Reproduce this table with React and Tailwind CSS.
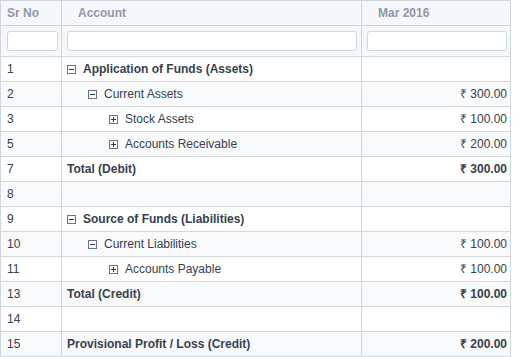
const rows = [
  { sr: 1, label: 'Application of Funds (Assets)', level: 0, toggle: 'minus', bold: true, amount: '' },
  { sr: 2, label: 'Current Assets', level: 1, toggle: 'minus', amount: '₹ 300.00' },
  { sr: 3, label: 'Stock Assets', level: 2, toggle: 'plus', amount: '₹ 100.00' },
  { sr: 5, label: 'Accounts Receivable', level: 2, toggle: 'plus', amount: '₹ 200.00' },
  { sr: 7, label: 'Total (Debit)', level: 0, bold: true, amount: '₹ 300.00' },
  { sr: 8, label: '', level: 0, amount: '' },
  { sr: 9, label: 'Source of Funds (Liabilities)', level: 0, toggle: 'minus', bold: true, amount: '' },
  { sr: 10, label: 'Current Liabilities', level: 1, toggle: 'minus', amount: '₹ 100.00' },
  { sr: 11, label: 'Accounts Payable', level: 2, toggle: 'plus', amount: '₹ 100.00' },
  { sr: 13, label: 'Total (Credit)', level: 0, bold: true, amount: '₹ 100.00' },
  { sr: 14, label: '', level: 0, amount: '' },
  { sr: 15, label: 'Provisional Profit / Loss (Credit)', level: 0, bold: true, amount: '₹ 200.00' },
]

const indents = ['pl-[5px]', 'pl-[26px]', 'pl-[47px]']

function Toggle({ type }) {
  return (
    <svg width="9" height="9" viewBox="0 0 9 9" className="shrink-0 mr-[7px]">
      <rect x="0.5" y="0.5" width="8" height="8" fill="#fff" stroke="#6b7480" />
      <path d="M2 4.5h5" stroke="#1f3b5c" strokeWidth="1" />
      {type === 'plus' && <path d="M4.5 2v5" stroke="#1f3b5c" strokeWidth="1" />}
    </svg>
  )
}

export default function App() {
  return (
    <div className="w-[513px] h-[357px] bg-white overflow-hidden text-[12px] text-[#36414c]" style={{ fontFamily: '"Liberation Sans", Arial, sans-serif' }}>
      <div className="w-[511px] border-l border-t border-r border-[#d1d8dd]">
        <div className="flex h-[25px] bg-[#f5f7fa] border-b border-[#d1d8dd] font-bold text-[#8d99a6]">
          <div className="w-[61px] border-r border-[#d1d8dd] pl-[6px] flex items-center">Sr No</div>
          <div className="w-[300px] border-r border-[#d1d8dd] pl-[16px] flex items-center">Account</div>
          <div className="flex-1 pl-[16px] flex items-center">Mar 2016</div>
        </div>
        <div className="flex h-[31px] bg-[#f5f7fa] border-b border-[#d1d8dd]">
          <div className="w-[61px] border-r border-[#d1d8dd] pl-[6px] pr-[3px] flex items-center">
            <div className="w-full h-[20px] bg-white border border-[#d1d8dd] rounded-[3px]" />
          </div>
          <div className="w-[300px] border-r border-[#d1d8dd] pl-[5px] pr-[4px] flex items-center">
            <div className="w-full h-[20px] bg-white border border-[#d1d8dd] rounded-[3px]" />
          </div>
          <div className="flex-1 pl-[5px] pr-[3px] flex items-center">
            <div className="w-full h-[20px] bg-white border border-[#d1d8dd] rounded-[3px]" />
          </div>
        </div>
        {rows.map((r, i) => (
          <div key={r.sr} className={`flex h-[25px] border-b border-[#d1d8dd] ${i % 2 ? 'bg-[#f8f9fb]' : 'bg-white'}`}>
            <div className="w-[61px] border-r border-[#d1d8dd] pl-[6px] flex items-center">{r.sr}</div>
            <div className={`w-[300px] border-r border-[#d1d8dd] flex items-center ${indents[r.level]} ${r.bold ? 'font-bold' : ''}`}>
              {r.toggle && <Toggle type={r.toggle} />}
              {r.label}
            </div>
            <div className={`flex-1 pr-[3px] flex items-center justify-end ${r.bold ? 'font-bold' : ''}`}>{r.amount}</div>
          </div>
        ))}
      </div>
    </div>
  )
}
